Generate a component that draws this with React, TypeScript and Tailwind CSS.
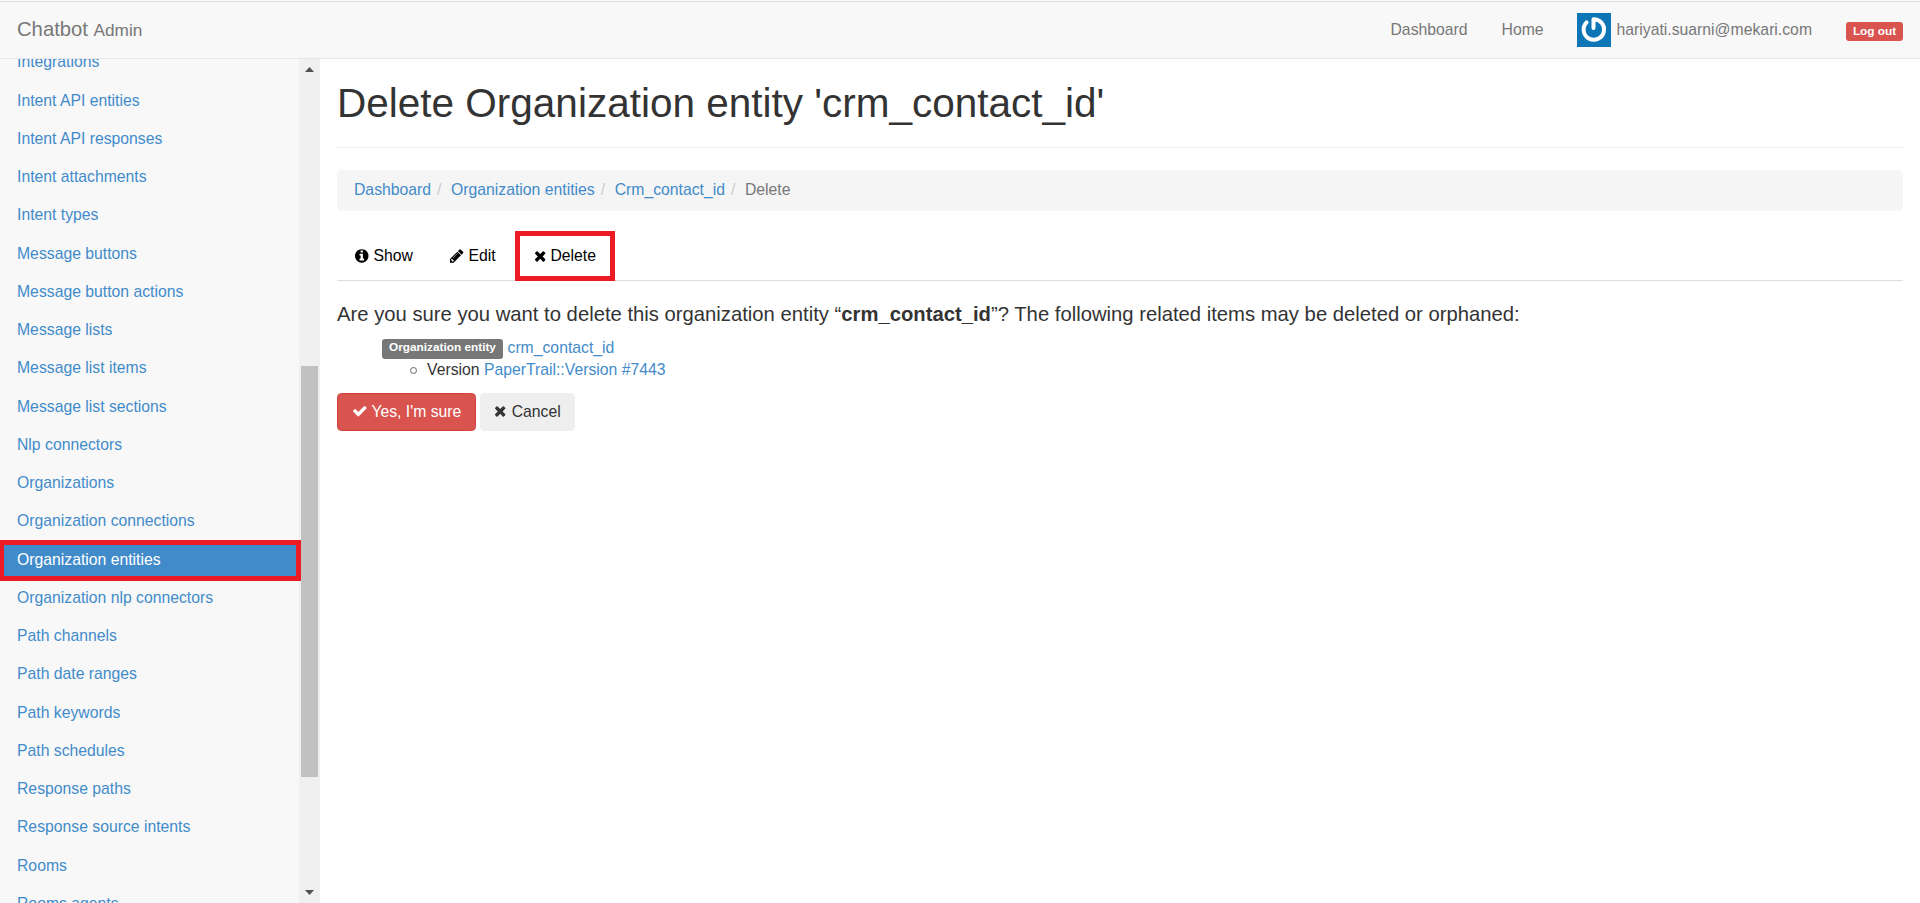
import React from "react";

const LINKS = [
  "Integrations", "Intent API entities", "Intent API responses", "Intent attachments", "Intent types",
  "Message buttons", "Message button actions", "Message lists", "Message list items", "Message list sections",
  "Nlp connectors", "Organizations", "Organization connections", "Organization entities",
  "Organization nlp connectors", "Path channels", "Path date ranges", "Path keywords", "Path schedules",
  "Response paths", "Response source intents", "Rooms", "Rooms agents",
];
const ACTIVE = "Organization entities";

function Glyph({ box, w, d }: { box: string; w: string; d: string }) {
  return (
    <svg viewBox={box} className={"-mt-[1.5px] h-[15.75px] shrink-0 " + w} fill="currentColor" aria-hidden="true">
      <path d={d} />
    </svg>
  );
}

const Info = () => (
  <Glyph box="128 0 1536 1792" w="w-[13.5px]" d="M1152 1376v-160q0-14-9-23t-23-9h-96v-512q0-14-9-23t-23-9h-320q-14 0-23 9t-9 23v160q0 14 9 23t23 9h96v320h-96q-14 0-23 9t-9 23v160q0 14 9 23t23 9h448q14 0 23-9t9-23zm-128-896v-160q0-14-9-23t-23-9h-192q-14 0-23 9t-9 23v160q0 14 9 23t23 9h192q14 0 23-9t9-23zm640 416q0 209-103 385.5t-279.5 279.5-385.5 103-385.5-103-279.5-279.5-103-385.5 103-385.5 279.5-279.5 385.5-103 385.5 103 279.5 279.5 103 385.5z" />
);
const Pencil = () => (
  <Glyph box="128 0 1536 1792" w="w-[13.5px]" d="M491 1536l91-91-235-235-91 91v107h128v128h107zm523-928q0-22-22-22-10 0-17 7l-542 542q-7 7-7 17 0 22 22 22 10 0 17-7l542-542q7-7 7-17zm-54-192l416 416-832 832h-416v-416zm683 96q0 53-37 90l-166 166-416-416 166-165q36-38 90-38 53 0 91 38l235 234q37 39 37 91z" />
);
const Cross = () => (
  <Glyph box="192 0 1408 1792" w="w-[12.4px]" d="M1490 1322q0 40-28 68l-136 136q-28 28-68 28t-68-28l-294-294-294 294q-28 28-68 28t-68-28l-136-136q-28-28-28-68t28-68l294-294-294-294q-28-28-28-68t28-68l136-136q28-28 68-28t68 28l294 294 294-294q28-28 68-28t68 28l136 136q28 28 28 68t-28 68l-294 294 294 294q28 28 28 68z" />
);
const Check = () => (
  <Glyph box="0 0 1792 1792" w="w-[15.75px]" d="M1671 566q0 40-28 68l-724 724-136 136q-28 28-68 28t-68-28l-136-136-362-362q-28-28-28-68t28-68l136-136q28-28 68-28t68 28l294 295 656-657q28-28 68-28t68 28l136 136q28 28 28 68z" />
);

function Avatar() {
  return (
    <svg viewBox="0 0 34 34" className="h-[34px] w-[34px]" aria-hidden="true">
      <rect width="34" height="34" fill="#0e75b6" />
      <path d="M9.6 9.3A10.2 10.2 0 1 0 16.5 6.3V15" fill="none" stroke="#fff" strokeWidth="4" strokeLinecap="round" strokeLinejoin="round" />
    </svg>
  );
}

function Header() {
  return (
    <header className="flex h-[59px] shrink-0 items-center border-b border-[#e7e7e7] bg-[linear-gradient(#f8f8f8_1px,#dadcdd_1px,#dadcdd_2px,#f8f8f8_2px)] pt-px text-[#777]">
      <div className="pl-[17px] text-[20.25px] leading-[22px]">
        Chatbot <span className="text-[17.2px]">Admin</span>
      </div>
      <nav className="ml-auto flex items-center pr-[17px]">
        <a className="mr-[34px] pt-[2px]">Dashboard</a>
        <a className="mr-[33px] pt-[2px]">Home</a>
        <span className="mr-[34px] flex items-center gap-[6px]">
          <Avatar />
          <span className="pt-[2px]">hariyati.suarni@mekari.com</span>
        </span>
        <span className="mt-[4px] flex h-[19px] w-[57px] items-center justify-center rounded-[3px] bg-[#d9534f] text-[11.8px] font-bold leading-none text-white">
          Log out
        </span>
      </nav>
    </header>
  );
}

function Sidebar() {
  return (
    <aside className="flex w-[320px] shrink-0 overflow-hidden bg-[#f8f8f8]">
      <ul className="-mt-[16px] w-[299px] shrink-0 text-[#428bca]">
        {LINKS.map((name) =>
          name === ACTIVE ? (
            <li key={name} className="relative flex h-[38.25px] items-center bg-[#428bca] pl-[17px] pt-px text-white">
              {name}
              <span className="absolute left-0 top-0 z-10 h-[41px] w-[301px] border-x-[4px] border-y-[5px] border-r-[5px] border-[#ed1c24]" />
            </li>
          ) : (
            <li key={name} className="flex h-[38.25px] items-center pl-[17px] pt-px">{name}</li>
          )
        )}
      </ul>
      <div className="flex w-[21px] flex-col items-center bg-[#f0f0f0]">
        <svg viewBox="0 0 9 5" className="mt-[8px] h-[5px] w-[9px] shrink-0" fill="#505050"><path d="M0 5L4.5 0L9 5z" /></svg>
        <div className="mt-[294px] h-[411px] w-[17px] shrink-0 bg-[#c1c1c1]" />
        <svg viewBox="0 0 9 5" className="mt-auto mb-[8px] h-[5px] w-[9px] shrink-0" fill="#505050"><path d="M0 0L4.5 5L9 0z" /></svg>
      </div>
    </aside>
  );
}

const Slash = () => <span className="w-[20px] pl-[6px] text-[#ccc]">/</span>;

export default function App() {
  return (
    <div className="flex h-[903px] flex-col overflow-hidden bg-white font-['Liberation_Sans',Arial,sans-serif] text-[15.75px] leading-[22.5px] text-[#333]">
      <Header />
      <div className="flex min-h-0 flex-1">
        <Sidebar />
        <main className="min-w-0 flex-1 pl-[17px] pr-[17px]">
          <h1 className="flex h-[89px] items-start border-b border-[#eee] pt-[22px] text-[40.5px] leading-[45px]">
            Delete Organization entity 'crm_contact_id'
          </h1>
          <div className="mt-[22px] flex h-[41px] items-center rounded-[4.5px] bg-[#f5f5f5] px-[17px] text-[#428bca]">
            <a>Dashboard</a><Slash />
            <a>Organization entities</a><Slash />
            <a>Crm_contact_id</a><Slash />
            <span className="text-[#777]">Delete</span>
          </div>
          <div className="mt-[20px] flex h-[50px] items-center border-b border-[#ddd] text-black">
            <a className="flex w-[95px] items-center gap-[5px] pl-[18px] pt-[2px]"><Info />Show</a>
            <a className="flex w-[83px] items-center gap-[5px] pl-[18px] pt-[2px]"><Pencil />Edit</a>
            <a className="-mb-px flex h-[50px] w-[100px] items-center gap-[4px] border-[5px] border-[#ed1c24] pl-[14px] pt-px"><Cross />Delete</a>
          </div>
          <p className="mt-[22px] text-[20.25px] leading-[22px]">
            Are you sure you want to delete this organization entity “<strong>crm_contact_id</strong>”? The following related items may be deleted or orphaned:
          </p>
          <ul className="mt-[12px] pl-[45px]">
            <li className="flex h-[22px] items-center gap-[4.5px]">
              <span className="mt-[1px] flex h-[20px] w-[121px] items-center justify-center rounded-[3px] bg-[#777] pb-[2px] text-[11.8px] font-bold leading-none text-white">
                Organization entity
              </span>
              <a className="text-[#428bca]">crm_contact_id</a>
            </li>
            <li className="flex h-[22px] items-center pl-[28px]">
              <span className="mr-[10px] mt-[1px] h-[7px] w-[7px] rounded-full border-[1.5px] border-[#666]" />
              <span>Version <a className="text-[#428bca]">PaperTrail::Version #7443</a></span>
            </li>
          </ul>
          <div className="mt-[12px] flex gap-[4px]">
            <button className="flex h-[38px] w-[139px] items-center justify-center gap-[4px] rounded-[4.5px] border border-[#d43f3a] bg-[#d9534f] text-white"><Check />Yes, I'm sure</button>
            <button className="flex h-[38px] w-[95px] items-center justify-center gap-[5px] rounded-[4.5px] bg-[#eee]"><Cross />Cancel</button>
          </div>
        </main>
      </div>
    </div>
  );
}
